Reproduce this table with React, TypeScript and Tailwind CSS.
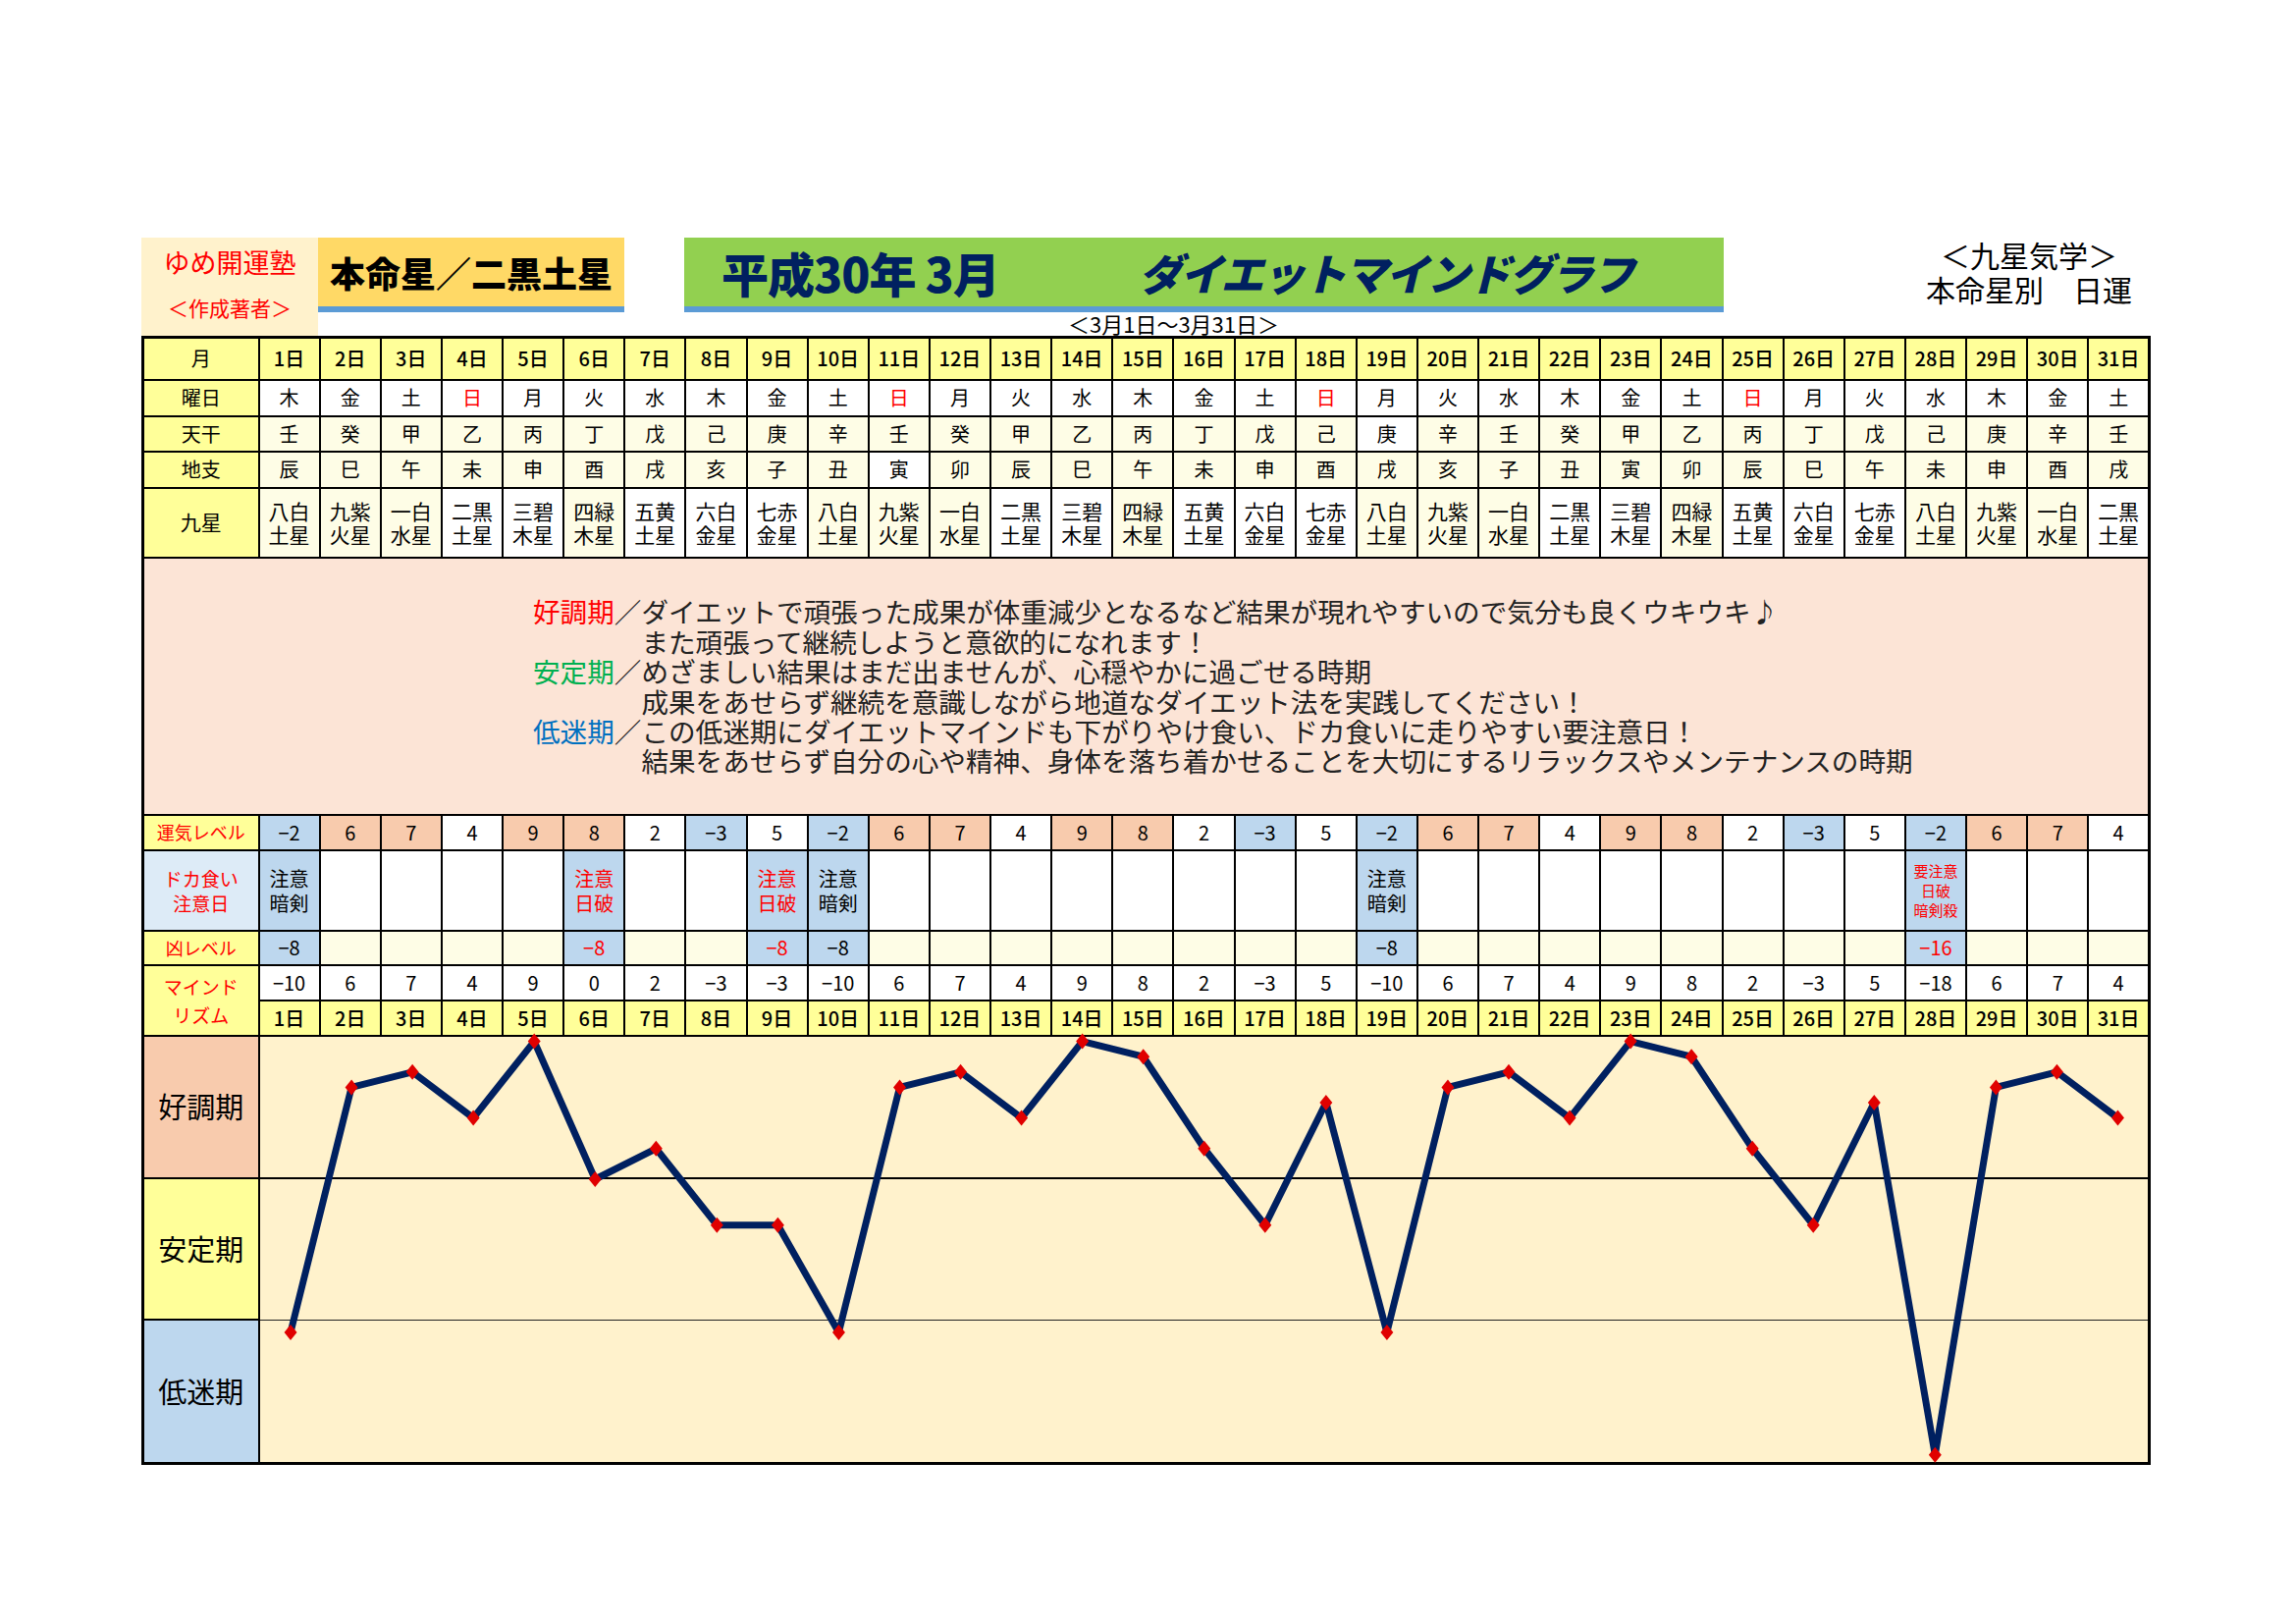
import React from 'react'

const TEN = '甲乙丙丁戊己庚辛壬癸'
const CHI = '子丑寅卯辰巳午未申酉戌亥'
const WEEK = '日月火水木金土'
const STARS = ['一白水星', '二黒土星', '三碧木星', '四緑木星', '五黄土星', '六白金星', '七赤金星', '八白土星', '九紫火星']
const LUCKY_STARS = [0, 3, 7, 8] // 一白・四緑・八白・九紫 は薄黄色

const UNKI = [-2, 6, 7, 4, 9, 8, 2, -3, 5]

type Caution = { lines: string[]; red: boolean; small?: boolean }
const CAUTION: Record<number, Caution> = {
  1: { lines: ['注意', '暗剣'], red: false },
  6: { lines: ['注意', '日破'], red: true },
  9: { lines: ['注意', '日破'], red: true },
  10: { lines: ['注意', '暗剣'], red: false },
  19: { lines: ['注意', '暗剣'], red: false },
  28: { lines: ['要注意', '日破', '暗剣殺'], red: true, small: true },
}
const KYO: Record<number, { v: number; red: boolean }> = {
  1: { v: -8, red: false },
  6: { v: -8, red: true },
  9: { v: -8, red: true },
  10: { v: -8, red: false },
  19: { v: -8, red: false },
  28: { v: -16, red: true },
}

const days = Array.from({ length: 31 }, (_, i) => {
  const d = i + 1
  const unki = UNKI[i % 9]
  const kyo = KYO[d]?.v ?? 0
  return {
    d,
    week: WEEK[(4 + i) % 7],
    ten: TEN[(8 + i) % 10],
    chi: CHI[(4 + i) % 12],
    star: (7 + i) % 9,
    unki,
    mind: unki + kyo,
  }
})

// Excel風のマイナス表記
const num = (v: number) => (v < 0 ? `−${-v}` : `${v}`)

const cell = 'border-2 border-black p-0 text-center align-middle'
const label = 'border-2 border-black p-0 text-center align-middle bg-[#ffff99]'
const pale = 'bg-[#fefde6]'

function unkiBg(v: number) {
  if (v < 0) return 'bg-[#bdd7ee]'
  if (v >= 6) return 'bg-[#f8cbad]'
  return 'bg-white'
}

function MindGraph({ values }: { values: number[] }) {
  const colW = 1929 / 31
  const pts = values.map((v, i) => [(i + 0.5) * colW, 145 - v * 15.6])
  return (
    <svg
      className="absolute inset-0 overflow-visible"
      width="100%"
      height="100%"
      viewBox="0 0 1929 433"
      preserveAspectRatio="none"
    >
      <polyline
        points={pts.map((p) => p.join(',')).join(' ')}
        fill="none"
        stroke="#002060"
        strokeWidth={7}
        strokeLinejoin="round"
      />
      {pts.map(([x, y], i) => (
        <polygon key={i} points={`${x},${y - 8} ${x + 6.5},${y} ${x},${y + 8} ${x - 6.5},${y}`} fill="#e00000" />
      ))}
    </svg>
  )
}

export default function App() {
  return (
    <div className="w-[2339px] h-[1654px] bg-white pt-[242px] pl-[144px] text-black font-['Noto_Sans_CJK_JP','Noto_Sans',sans-serif]">
      {/* header */}
      <div className="flex h-[100px] items-start">
        <div className="flex h-[100px] w-[180px] flex-col items-center bg-[#fff2cc] pt-[10px] text-[#ff0000]">
          <div className="text-[27px] leading-[30px]">ゆめ開運塾</div>
          <div className="mt-[19px] text-[21px] leading-[24px]">＜作成著者＞</div>
        </div>
        <div className="w-[312px]">
          <div className="flex h-[70px] items-center justify-center bg-[#ffd966] text-[36px] font-black">本命星／二黒土星</div>
          <div className="h-[6px] bg-[#5b9bd5]" />
        </div>
        <div className="ml-[61px] w-[1059px]">
          <div className="flex h-[70px] items-center bg-[#92d050] pl-[38px] font-black text-[#002060]">
            <span className="w-[425px] text-[48px] tracking-[-1px]">平成30年 3月</span>
            <span className="text-[44px] italic tracking-[-2px]">ダイエットマインドグラフ</span>
          </div>
          <div className="h-[6px] bg-[#5b9bd5]" />
          <div className="pr-[62px] text-center text-[22px] leading-[22px]">＜3月1日～3月31日＞</div>
        </div>
        <div className="ml-[181px] w-[260px] text-center text-[30px] leading-[35px]">
          <div>＜九星気学＞</div>
          <div>本命星別　日運</div>
        </div>
      </div>

      {/* table */}
      <table className="w-[2047px] table-fixed border-collapse border-[3px] border-black text-[20px]">
        <colgroup>
          <col className="w-[118px]" />
          {days.map((d) => (
            <col key={d.d} />
          ))}
        </colgroup>
        <tbody>
          <tr>
            <td className={`${label} h-[43px]`}>月</td>
            {days.map((d) => (
              <td key={d.d} className={`${label} font-medium`}>
                {d.d}日
              </td>
            ))}
          </tr>
          <tr>
            <td className={`${label} h-[37px]`}>曜日</td>
            {days.map((d) => (
              <td key={d.d} className={`${cell} bg-white ${d.week === '日' ? 'text-[#ff0000]' : ''}`}>
                {d.week}
              </td>
            ))}
          </tr>
          <tr>
            <td className={`${label} h-[36px]`}>天干</td>
            {days.map((d) => (
              <td key={d.d} className={`${cell} ${d.d === 19 ? 'bg-white' : pale}`}>
                {d.ten}
              </td>
            ))}
          </tr>
          <tr>
            <td className={`${label} h-[37px]`}>地支</td>
            {days.map((d) => (
              <td key={d.d} className={`${cell} ${d.d === 11 ? 'bg-white' : pale}`}>
                {d.chi}
              </td>
            ))}
          </tr>
          <tr>
            <td className={`${label} h-[71px] text-[21px]`}>九星</td>
            {days.map((d) => (
              <td
                key={d.d}
                className={`${cell} text-[21px] leading-[24px] ${LUCKY_STARS.includes(d.star) ? pale : 'bg-white'}`}
              >
                {STARS[d.star].slice(0, 2)}
                <br />
                {STARS[d.star].slice(2)}
              </td>
            ))}
          </tr>
          <tr>
            <td colSpan={32} className="h-[262px] border-2 border-black bg-[#fce4d6] p-0 align-middle">
              <div className="pl-[396px] text-[27.6px] leading-[30.4px] text-[#222]">
                <div>
                  <span className="text-[#ff0000]">好調期</span>／ダイエットで頑張った成果が体重減少となるなど結果が現れやすいので気分も良くウキウキ♪
                </div>
                <div className="pl-[4em]">また頑張って継続しようと意欲的になれます！</div>
                <div>
                  <span className="text-[#00b050]">安定期</span>／めざましい結果はまだ出ませんが、心穏やかに過ごせる時期
                </div>
                <div className="pl-[4em]">成果をあせらず継続を意識しながら地道なダイエット法を実践してください！</div>
                <div>
                  <span className="text-[#0070c0]">低迷期</span>／この低迷期にダイエットマインドも下がりやけ食い、ドカ食いに走りやすい要注意日！
                </div>
                <div className="pl-[4em]">
                  結果をあせらず自分の心や精神、身体を落ち着かせることを大切にするリラックスやメンテナンスの時期
                </div>
              </div>
            </td>
          </tr>
          <tr>
            <td className={`${label} h-[36px] text-[18px] text-[#ff0000]`}>運気レベル</td>
            {days.map((d) => (
              <td key={d.d} className={`${cell} ${unkiBg(d.unki)}`}>
                {num(d.unki)}
              </td>
            ))}
          </tr>
          <tr>
            <td className={`${cell} h-[82px] bg-[#ddebf7] text-[19px] leading-[25px] text-[#ff0000]`}>
              ドカ食い
              <br />
              注意日
            </td>
            {days.map((d) => {
              const c = CAUTION[d.d]
              return (
                <td
                  key={d.d}
                  className={`${cell} ${c ? 'bg-[#bdd7ee]' : 'bg-white'} ${c?.red ? 'text-[#ff0000]' : ''} ${
                    c?.small ? 'text-[15px] leading-[20px]' : 'leading-[25px]'
                  }`}
                >
                  {c?.lines.map((l, i) => (
                    <div key={i}>{l}</div>
                  ))}
                </td>
              )
            })}
          </tr>
          <tr>
            <td className={`${label} h-[35px] text-[18px] text-[#ff0000]`}>凶レベル</td>
            {days.map((d) => {
              const k = KYO[d.d]
              return (
                <td
                  key={d.d}
                  className={`${cell} ${k ? 'bg-[#bdd7ee]' : pale} ${k?.red ? 'text-[#ff0000]' : ''}`}
                >
                  {k ? num(k.v) : null}
                </td>
              )
            })}
          </tr>
          <tr>
            <td rowSpan={2} className={`${label} text-[19px] leading-[29px] text-[#ff0000]`}>
              マインド
              <br />
              リズム
            </td>
            {days.map((d) => (
              <td key={d.d} className={`${cell} h-[36px] bg-white`}>
                {num(d.mind)}
              </td>
            ))}
          </tr>
          <tr>
            {days.map((d) => (
              <td key={d.d} className={`${label} h-[36px] font-medium`}>
                {d.d}日
              </td>
            ))}
          </tr>
          <tr>
            <td className="border-2 border-black p-0 align-top">
              <div className="flex h-[433px] flex-col text-[29px]">
                <div className="flex h-[145px] items-center justify-center border-b-2 border-black bg-[#f8cbad]">好調期</div>
                <div className="flex h-[144px] items-center justify-center border-b-2 border-black bg-[#ffff99]">安定期</div>
                <div className="flex flex-1 items-center justify-center bg-[#bdd7ee]">低迷期</div>
              </div>
            </td>
            <td colSpan={31} className="border-2 border-black bg-[#fff2cc] p-0 align-top">
              <div className="relative h-[433px]">
                <div className="flex h-full flex-col">
                  <div className="h-[145px] border-b-2 border-black" />
                  <div className="h-[144px] border-b-[1.5px] border-[#222]" />
                  <div className="flex-1" />
                </div>
                <MindGraph values={days.map((d) => d.mind)} />
              </div>
            </td>
          </tr>
        </tbody>
      </table>
    </div>
  )
}
